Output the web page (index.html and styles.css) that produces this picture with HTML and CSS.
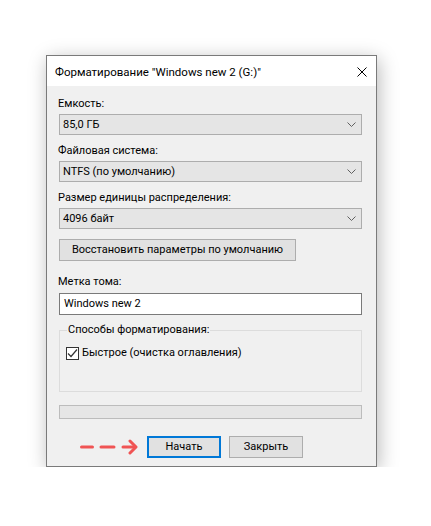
FILE: index.html
```
<!DOCTYPE html>
<html lang="ru">

<head>
    <meta charset="UTF-8">
    <meta name="viewport" content="width=device-width, initial-scale=1.0">
    <title>Форматирование</title>

    <link rel="stylesheet" href="styles.css">
</head>

<body>

    <div class='dialog'>
        <div class='titlebar'>
            <span class='title'>Форматирование "Windows new 2 (G:)"</span>
            <svg class='close' width="10" height="10" viewBox="0 0 10 10">
                <path d="M0.5 0.5 L9.5 9.5 M9.5 0.5 L0.5 9.5" stroke="#000" stroke-width="1" fill="none" />
            </svg>
        </div>

        <div class='content'>
            <div class='label first'>Емкость:</div>
            <div class='combo'>
                <span>85,0 ГБ</span>
                <svg class='chevron' width="9" height="5" viewBox="0 0 9 5">
                    <path d="M0.5 0.5 L4.5 4.5 L8.5 0.5" stroke="#606060" stroke-width="1" fill="none" />
                </svg>
            </div>

            <div class='label'>Файловая система:</div>
            <div class='combo'>
                <span>NTFS (по умолчанию)</span>
                <svg class='chevron' width="9" height="5" viewBox="0 0 9 5">
                    <path d="M0.5 0.5 L4.5 4.5 L8.5 0.5" stroke="#606060" stroke-width="1" fill="none" />
                </svg>
            </div>

            <div class='label'>Размер единицы распределения:</div>
            <div class='combo'>
                <span>4096 байт</span>
                <svg class='chevron' width="9" height="5" viewBox="0 0 9 5">
                    <path d="M0.5 0.5 L4.5 4.5 L8.5 0.5" stroke="#606060" stroke-width="1" fill="none" />
                </svg>
            </div>

            <button class='btn restore'>Восстановить параметры по умолчанию</button>

            <div class='label volume'>Метка тома:</div>
            <div class='textbox'>Windows new 2</div>

            <fieldset class='group'>
                <legend>Способы форматирования:</legend>
                <label class='check'>
                    <span class='box'>
                        <svg width="11" height="11" viewBox="0 0 11 11">
                            <path d="M1 5.5 L4 8.5 L10 1.5" stroke="#333" stroke-width="1.2" fill="none" />
                        </svg>
                    </span>
                    Быстрое (очистка оглавления)
                </label>
            </fieldset>

            <div class='progress'></div>

            <div class='actions'>
                <svg class='pointer' width="58" height="16" viewBox="0 0 58 16">
                    <g stroke="#f05454" stroke-width="3" fill="none" stroke-linecap="round">
                        <path d="M1.5 8 H12.5" />
                        <path d="M21 8 H34" />
                        <path d="M43 8 H55" />
                        <path d="M50 2 L56 8 L50 14" stroke-linejoin="round" />
                    </g>
                </svg>
                <button class='btn primary'>Начать</button>
                <button class='btn'>Закрыть</button>
            </div>
        </div>
    </div>

</body>

</html>
```

FILE: styles.css
```
* {
    padding: 0;
    margin: 0;
    box-sizing: border-box;
}

html,
body {
    background: #fff;
}

body {
    font-family: Roboto, "Liberation Sans", sans-serif;
    font-size: 11px;
    color: #000;
    padding: 55px 0 0 46px;
}

.dialog {
    width: 331px;
    height: 412px;
    border: 1px solid #7a7a7a;
    background: #f0f0f0;
    box-shadow: 2px 4px 18px rgba(0, 0, 0, .28);
}

.titlebar {
    height: 30px;
    background: #fff;
    display: flex;
    align-items: center;
    justify-content: space-between;
    padding: 0 9px 0 8px;
}

.title {
    font-size: 11.5px;
    line-height: 16px;
    padding-top: 2px;
    white-space: nowrap;
}

.close {
    display: block;
    margin-top: 2px;
}

.content {
    padding: 10px 14px 0 11px;
    display: flex;
    flex-direction: column;
}

.label {
    line-height: 16px;
    margin-top: 8px;
}

.label.first {
    margin-top: 0;
}

.label.volume {
    margin-top: 13px;
}

.combo {
    margin-top: 2px;
    margin-left: 1px;
    height: 21px;
    border: 1px solid #adadad;
    background: #e5e5e5;
    display: flex;
    align-items: center;
    justify-content: space-between;
    padding: 0 5px 0 3px;
    line-height: 16px;
}

.chevron {
    display: block;
}

.btn {
    font-family: inherit;
    font-size: 11px;
    color: #000;
    height: 22px;
    border: 1px solid #adadad;
    background: #e1e1e1;
    line-height: 16px;
    white-space: nowrap;
}

.restore {
    margin-top: 10px;
    margin-left: 1px;
    width: 237px;
    align-self: flex-start;
}

.textbox {
    margin-top: 3px;
    margin-left: 1px;
    height: 22px;
    border: 1px solid #7a7a7a;
    background: #fff;
    padding: 0 4px;
    line-height: 19px;
}

.group {
    margin-top: 7px;
    margin-left: 1px;
    height: 70px;
    border: 1px solid #dcdcdc;
    padding: 0 6px;
}

.group legend {
    margin-left: 1px;
    padding: 0 1px;
    line-height: 16px;
}

.check {
    display: flex;
    align-items: center;
    gap: 3px;
    margin-top: 7px;
    line-height: 16px;
}

.box {
    width: 13px;
    height: 13px;
    border: 1px solid #333;
    background: #fff;
    display: flex;
    align-items: center;
    justify-content: center;
}

.box svg {
    display: block;
}

.progress {
    margin-top: 13px;
    margin-left: 1px;
    height: 14px;
    border: 1px solid #bcbcbc;
    background: #e6e6e6;
}

.actions {
    margin-top: 17px;
    display: flex;
    align-items: center;
    padding-left: 22px;
}

.pointer {
    display: block;
    margin-right: 9px;
}

.actions .btn {
    width: 74px;
    margin-right: 8px;
}

.actions .primary {
    border: 2px solid #0078d7;
}
```
